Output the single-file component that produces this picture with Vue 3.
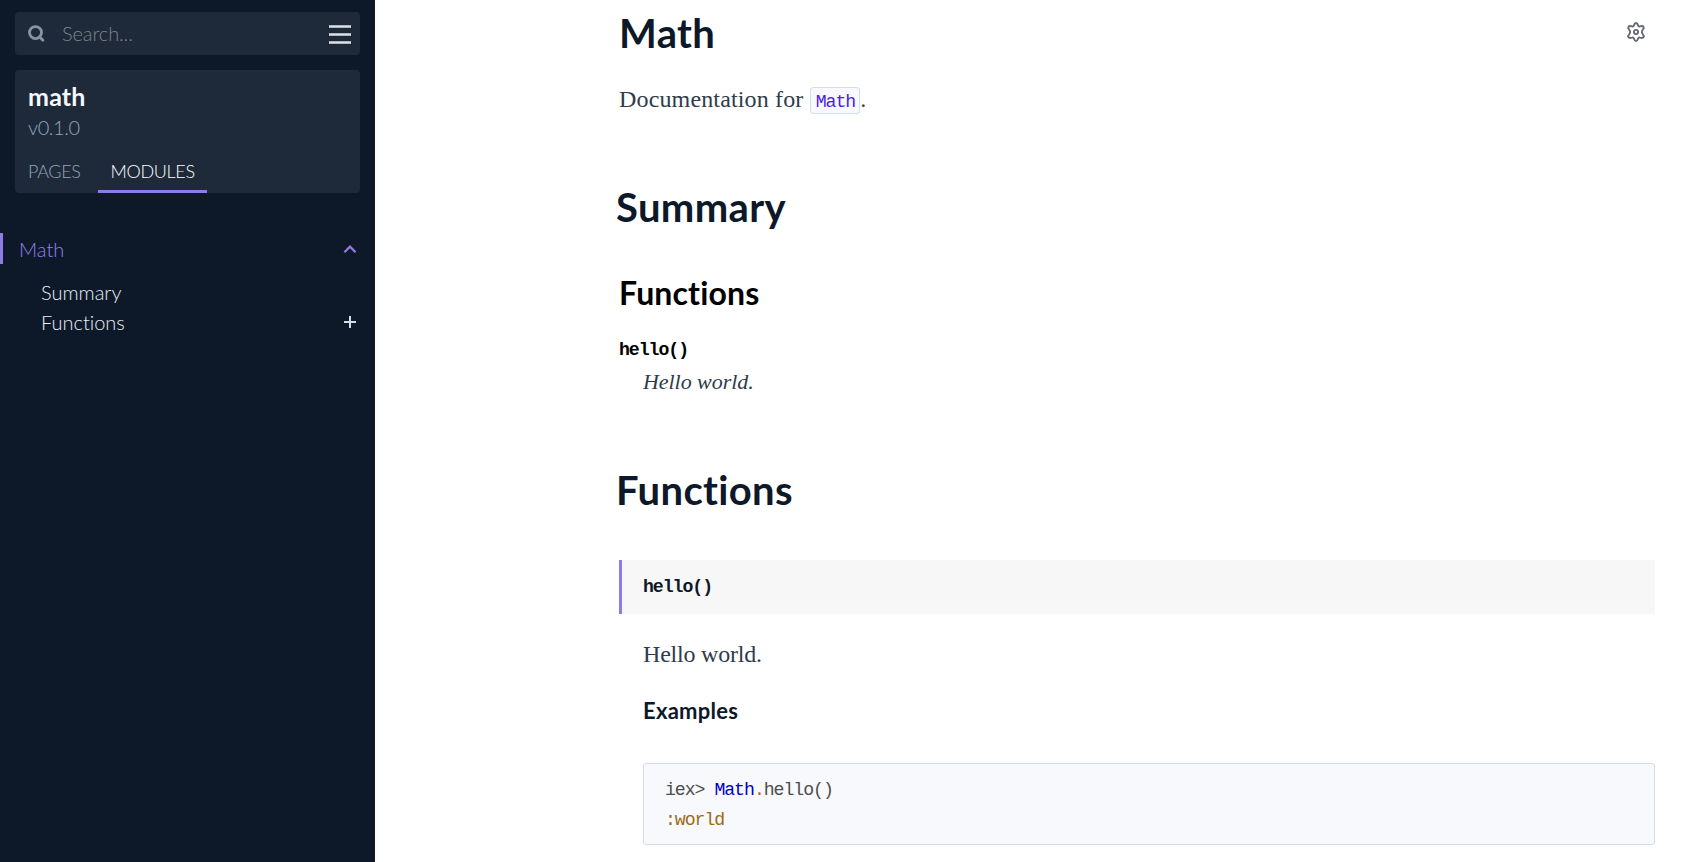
<script setup>
const tabs = [
  { label: 'Pages', active: false },
  { label: 'Modules', active: true },
]
const sections = [
  { label: 'Summary', expandable: false },
  { label: 'Functions', expandable: true },
]
</script>

<template>
  <div class="page">
    <aside class="sidebar">
      <div class="search">
        <svg class="search-icon" viewBox="0 0 18 18"><circle cx="8.500" cy="7.600" r="6" /><path d="M12.500 11.800l3.400 3.400" /></svg>
        <span class="placeholder">Search...</span>
        <svg class="burger" viewBox="0 0 22 20"><path d="M0 1.5h22M0 9.5h22M0 17.5h22" /></svg>
      </div>
      <header class="project">
        <div class="name">math</div>
        <div class="version">v0.1.0</div>
        <nav class="tabs">
          <span v-for="t in tabs" :key="t.label" class="tab" :class="{ active: t.active }">{{ t.label }}</span>
        </nav>
      </header>
      <div class="module">
        <span>Math</span>
        <svg class="chevron" viewBox="0 0 14 10"><path d="M1.400 8.200L7 2.600l5.600 5.600" /></svg>
      </div>
      <ul class="sections">
        <li v-for="s in sections" :key="s.label">
          <span>{{ s.label }}</span>
          <svg v-if="s.expandable" class="plus" viewBox="0 0 12 12"><path d="M0 6h12M6 0v12" /></svg>
        </li>
      </ul>
    </aside>

    <main class="content">
      <div class="title-row">
        <h1>Math</h1>
        <svg class="gear" viewBox="0 0 20 20"><path d="M8 3.200C8.500 1.500 9 1 10 1s1.500.5 2 2.200c.3 1 1 1.400 2 1.100 2-.5 3-.4 3.600.700.6 1 .3 1.700-.9 2.900-.8.800-.8 1.400-.8 2.100s0 1.300.8 2.100c1.200 1.200 1.500 1.900.9 2.900-.6 1.100-1.600 1.200-3.600.7-1-.3-1.700.1-2 1.100-.5 1.700-1 2.200-2 2.200s-1.500-.5-2-2.200c-.3-1-1-1.400-2-1.100-2 .5-3 .4-3.600-.7-.6-1-.3-1.700.9-2.900.8-.8.8-1.400.8-2.100s0-1.300-.8-2.100c-1.200-1.200-1.500-1.900-.9-2.900.6-1.100 1.600-1.200 3.600-.7 1 .3 1.700-.1 2-1.100z" /><circle cx="10" cy="10" r="2.100" /></svg>
      </div>
      <p class="intro">Documentation for <code>Math</code>.</p>
      <h1 class="heading summary">Summary</h1>
      <h2>Functions</h2>
      <div class="signature">hello()</div>
      <div class="synopsis">Hello world.</div>
      <h1 class="heading functions">Functions</h1>
      <div class="detail-header">hello()</div>
      <section class="docstring">
        <p>Hello world.</p>
        <h3>Examples</h3>
        <pre><span class="prompt">iex&gt; </span><span class="module-name">Math</span><span class="dot">.</span>hello()
<span class="atom">:world</span></pre>
      </section>
    </main>
  </div>
</template>

<style>
body {
  background: #fff;
}
</style>

<style scoped>
.page {
  display: flex;
  height: 862px;
  overflow: hidden;
  font-family: Lato, sans-serif;
  font-variant-ligatures: none;
}
svg {
  display: block;
  fill: none;
  flex: none;
}
.sidebar {
  box-sizing: border-box;
  width: 375px;
  flex: none;
  padding-top: 12px;
  background: #0d1829;
  font-size: 20px;
  font-weight: 300;
}
.search {
  display: flex;
  align-items: center;
  height: 43px;
  margin: 0 15px;
  padding: 0 9px 0 12px;
  box-sizing: border-box;
  border-radius: 4px;
  background: #1e2a3a;
}
.search-icon {
  width: 18px;
  height: 18px;
  stroke: #8a939f;
  stroke-width: 2.8;
  stroke-linecap: round;
}
.placeholder {
  flex: 1;
  margin-left: 17px;
  color: #808386;
  line-height: 43px;
  letter-spacing: -0.1px;
}
.burger {
  width: 22px;
  height: 20px;
  margin-top: 3px;
  stroke: #e0e2e5;
  stroke-width: 2.6;
}
.project {
  height: 123px;
  margin: 15px 15px 0;
  padding: 11px 13px 0;
  box-sizing: border-box;
  border-radius: 4px;
  background: #1e2a3a;
}
.name {
  font-size: 25px;
  font-weight: 700;
  line-height: 31px;
  letter-spacing: 0.2px;
  color: #f5f7fa;
}
.version {
  line-height: 30px;
  letter-spacing: -0.4px;
  color: #93a5ba;
}
.tabs {
  display: flex;
  gap: 5px;
  margin: 7px 0 0 -13px;
}
.tab {
  height: 44px;
  padding: 0 12px 0 13px;
  box-sizing: border-box;
  border-bottom: 3px solid transparent;
  font-size: 18px;
  line-height: 44px;
  letter-spacing: -0.35px;
  text-transform: uppercase;
  color: #93a5ba;
}
.tab.active {
  color: #fff;
  border-color: #8e7ce6;
}
.module {
  display: flex;
  align-items: center;
  justify-content: space-between;
  height: 31px;
  margin-top: 40px;
  padding: 0 18px 0 16px;
  border-left: 3px solid #8e7ce6;
  color: #9481f0;
  line-height: 33px;
}
.module span {
  padding-top: 1px;
}
.chevron {
  width: 14px;
  height: 10px;
  stroke: #8e7ce6;
  stroke-width: 2.2;
}
.sections {
  list-style: none;
  margin: 13px 0 0;
  padding: 0 19px 0 41px;
  color: #e8eef5;
}
.sections li {
  display: flex;
  align-items: center;
  justify-content: space-between;
  height: 30px;
  line-height: 30px;
}
.plus {
  width: 12px;
  height: 12px;
  stroke: #d8dee6;
  stroke-width: 2;
}
.content {
  flex: 1;
  padding: 0 42px 0 244px;
  color: #0d1829;
}
h1, h2, h3, p, pre {
  margin: 0;
}
h1 {
  font-size: 40px;
  font-weight: 700;
  line-height: 50px;
  letter-spacing: 0.35px;
}
.title-row {
  display: flex;
  justify-content: space-between;
  padding-top: 8px;
}
.gear {
  width: 20px;
  height: 20px;
  margin: 14px 9px 0 0;
  stroke: #666a70;
  stroke-width: 1.9;
}
p, .synopsis {
  font-family: "Liberation Serif", serif;
  font-size: 24px;
  line-height: 34px;
  letter-spacing: -0.2px;
  color: #303b4c;
}
code, .signature, .detail-header, pre {
  font-family: "Liberation Mono", monospace;
  font-size: 18.2px;
  letter-spacing: -1.04px;
}
.intro {
  height: 34px;
  margin-top: 24px;
  letter-spacing: 0.15px;
}
code {
  display: inline-block;
  padding: 3px 4px 0 5px;
  border: 1px solid #d2ddee;
  border-radius: 3px;
  background: #f7f9fd;
  color: #4b24d8;
  line-height: 22px;
}
.heading {
  margin-left: -3px;
}
.summary {
  margin-top: 66px;
}
h2 {
  margin-top: 41px;
  font-size: 32px;
  font-weight: 700;
  line-height: 40px;
  letter-spacing: 0.15px;
  color: #000;
}
.signature {
  margin-top: 22px;
  font-weight: 700;
  line-height: 31px;
  color: #000;
}
.synopsis {
  margin: -1px 0 0 24px;
  font-size: 22px;
  font-style: italic;
  letter-spacing: -0.05px;
}
.functions {
  margin-top: 66px;
}
.detail-header {
  height: 54px;
  margin-top: 45px;
  padding-left: 21px;
  border-left: 3px solid #8e7ce6;
  background: #f7f7f7;
  box-sizing: border-box;
  font-weight: 700;
  line-height: 55px;
}
.docstring {
  margin: 23px 0 0 24px;
}
h3 {
  margin-top: 25px;
  font-size: 22px;
  font-weight: 700;
  line-height: 30px;
  letter-spacing: 0.25px;
}
pre {
  height: 82px;
  box-sizing: border-box;
  margin-top: 37px;
  padding: 11px 21px 0;
  border: 1px solid #d2ddee;
  border-radius: 3px;
  background: #f7f9fd;
  color: #4d4d4d;
  line-height: 30px;
}
.module-name {
  color: #0000c8;
}
.dot {
  color: #b5651d;
}
.atom {
  color: #a06a14;
}
</style>
